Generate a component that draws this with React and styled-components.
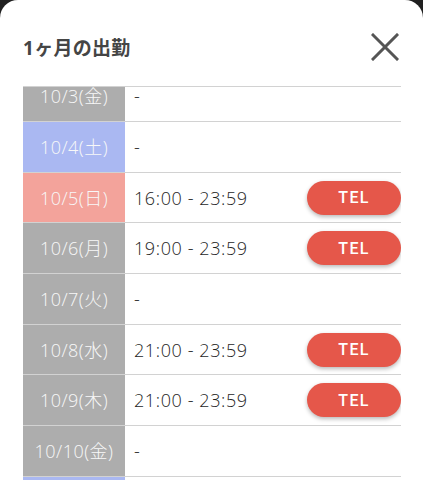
import React from "react";
import styled, { createGlobalStyle } from "styled-components";

const GlobalStyle = createGlobalStyle`
  html, body {
    margin: 0;
    padding: 0;
    background: #202020;
  }
  * { box-sizing: border-box; }
`;

const Sheet = styled.div`
  width: 423px;
  height: 480px;
  background: #ffffff;
  border-radius: 18px 18px 0 0;
  padding: 0 22px 0 23px;
  overflow: hidden;
  font-family: "Open Sans", "Noto Sans CJK JP", sans-serif;
`;

const Header = styled.div`
  height: 86px;
  padding-top: 8px;
  display: flex;
  align-items: center;
  justify-content: space-between;
`;

const Title = styled.h2`
  margin: 0;
  font-size: 19px;
  font-weight: 700;
  color: #454545;
  letter-spacing: 0.3px;
`;

const CloseButton = styled.button`
  width: 34px;
  height: 34px;
  margin-right: -1px;
  padding: 0;
  border: none;
  background: transparent;
  display: flex;
  align-items: center;
  justify-content: center;
  cursor: pointer;
`;

const TableViewport = styled.div`
  border-top: 1px solid #d2d2d2;
  height: 394px;
  overflow: hidden;
`;

const List = styled.div`
  margin-top: -15.7px;
`;

const Row = styled.div`
  display: flex;
  align-items: stretch;
  height: 50.7px;
  border-bottom: 1px solid #d2d2d2;
`;

const dayColors = {
  weekday: "#adadad",
  sat: "#aab8f2",
  sun: "#f3a39b",
};

const DateCell = styled.div`
  width: 102px;
  flex: none;
  display: flex;
  align-items: center;
  justify-content: center;
  background: ${(p) => dayColors[p.$kind]};
  color: #f8f8f8;
  font-size: 18px;
  font-weight: 300;
  line-height: 1;
  letter-spacing: 0.5px;
`;

const TimeCell = styled.div`
  flex: 1;
  display: flex;
  align-items: center;
  justify-content: space-between;
  padding-left: 9px;
  color: #1e1e1e;
  font-size: 18px;
  font-weight: 300;
  line-height: 1;
  letter-spacing: 0.6px;
`;

const TelButton = styled.button`
  width: 94px;
  height: 34px;
  border: none;
  border-radius: 17px;
  background: #e5574a;
  color: #ffffff;
  font-family: Roboto, "Noto Sans", sans-serif;
  font-size: 16px;
  font-weight: 500;
  letter-spacing: 1.3px;
  box-shadow: 0 2px 4px rgba(0, 0, 0, 0.28);
  cursor: pointer;
`;

const rows = [
  { date: "10/3(金)", kind: "weekday", time: null },
  { date: "10/4(土)", kind: "sat", time: null },
  { date: "10/5(日)", kind: "sun", time: "16:00 - 23:59" },
  { date: "10/6(月)", kind: "weekday", time: "19:00 - 23:59" },
  { date: "10/7(火)", kind: "weekday", time: null },
  { date: "10/8(水)", kind: "weekday", time: "21:00 - 23:59" },
  { date: "10/9(木)", kind: "weekday", time: "21:00 - 23:59" },
  { date: "10/10(金)", kind: "weekday", time: null },
  { date: "10/11(土)", kind: "sat", time: null },
];

export default function App() {
  return (
    <>
      <GlobalStyle />
      <Sheet>
        <Header>
          <Title>1ヶ月の出勤</Title>
          <CloseButton aria-label="閉じる">
            <svg width="28" height="28" viewBox="0 0 28 28">
              <path
                d="M2 2 L26 26 M26 2 L2 26"
                stroke="#555555"
                strokeWidth="3"
                strokeLinecap="square"
                fill="none"
              />
            </svg>
          </CloseButton>
        </Header>
        <TableViewport>
          <List>
            {rows.map((r) => (
              <Row key={r.date}>
                <DateCell $kind={r.kind}>{r.date}</DateCell>
                <TimeCell>
                  <span>{r.time ?? "-"}</span>
                  {r.time && <TelButton>TEL</TelButton>}
                </TimeCell>
              </Row>
            ))}
          </List>
        </TableViewport>
      </Sheet>
    </>
  );
}
